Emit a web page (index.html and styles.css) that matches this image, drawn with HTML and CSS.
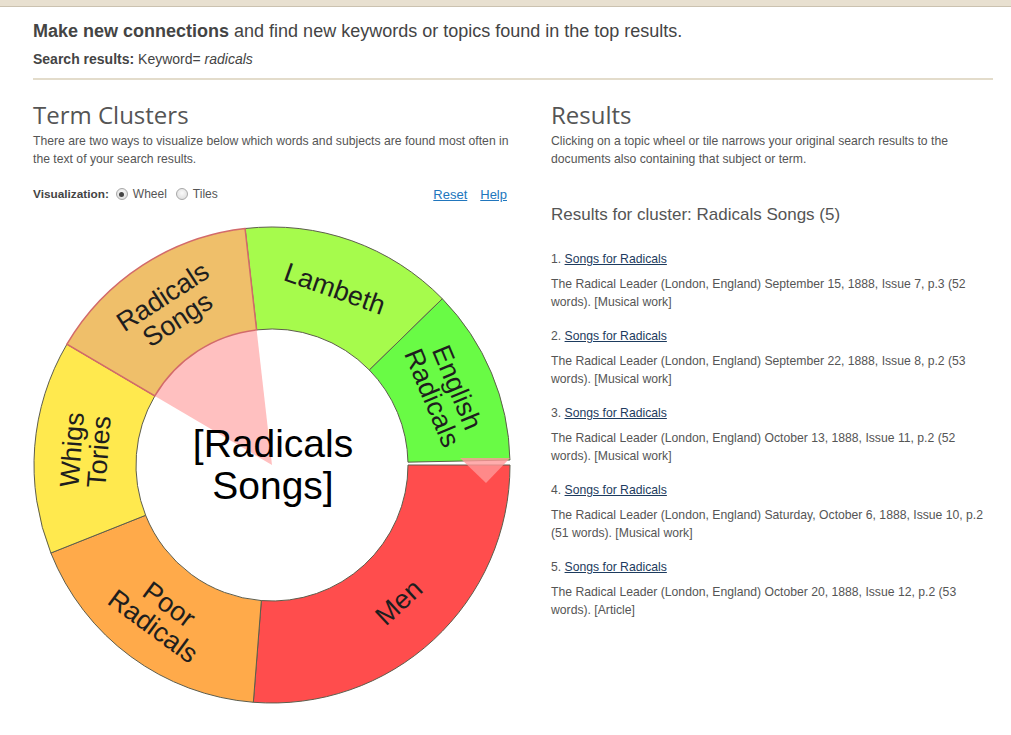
FILE: index.html
```html
<!DOCTYPE html>
<html>
<head>
    <meta charset="UTF-8">
    <title>Term Clusters</title>
    <link rel="stylesheet" href="styles.css">
</head>
<body>
    <div class="top-bar"></div>
    <div class="page">
        <h1 class="intro"><b>Make new connections</b> and find new keywords or topics found in the top results.</h1>
        <div class="search-line"><b>Search results:</b> Keyword= <i>radicals</i></div>
        <div class="divider"></div>

        <div class="columns">
            <div class="left-col">
                <h2 class="col-title">Term Clusters</h2>
                <p class="col-desc">There are two ways to visualize below which words and subjects are found most often in the text of your search results.</p>
                <div class="viz-bar">
                    <span class="viz-label">Visualization:</span>
                    <label class="viz-option"><input type="radio" name="viz" checked> Wheel</label>
                    <label class="viz-option"><input type="radio" name="viz"> Tiles</label>
                    <span class="viz-links">
                        <a href="#">Reset</a>
                        <a href="#">Help</a>
                    </span>
                </div>
                <svg class="wheel" id="wheel" width="478" height="478" viewBox="0 0 478 478"></svg>
            </div>

            <div class="right-col">
                <h2 class="col-title">Results</h2>
                <p class="col-desc">Clicking on a topic wheel or tile narrows your original search results to the documents also containing that subject or term.</p>
                <div class="cluster-title">Results for cluster: Radicals Songs (5)</div>
                <ol class="result-list">
                    <li>
                        <div class="result-title">1. <a href="#">Songs for Radicals</a></div>
                        <div class="result-desc">The Radical Leader (London, England) September 15, 1888, Issue 7, p.3 (52 words). [Musical work]</div>
                    </li>
                    <li>
                        <div class="result-title">2. <a href="#">Songs for Radicals</a></div>
                        <div class="result-desc">The Radical Leader (London, England) September 22, 1888, Issue 8, p.2 (53 words). [Musical work]</div>
                    </li>
                    <li>
                        <div class="result-title">3. <a href="#">Songs for Radicals</a></div>
                        <div class="result-desc">The Radical Leader (London, England) October 13, 1888, Issue 11, p.2 (52 words). [Musical work]</div>
                    </li>
                    <li>
                        <div class="result-title">4. <a href="#">Songs for Radicals</a></div>
                        <div class="result-desc">The Radical Leader (London, England) Saturday, October 6, 1888, Issue 10, p.2 (51 words). [Musical work]</div>
                    </li>
                    <li>
                        <div class="result-title">5. <a href="#">Songs for Radicals</a></div>
                        <div class="result-desc">The Radical Leader (London, England) October 20, 1888, Issue 12, p.2 (53 words). [Article]</div>
                    </li>
                </ol>
            </div>
        </div>
    </div>

    <script>
    const NS = 'http://www.w3.org/2000/svg';
    const wheel = document.getElementById('wheel');
    const cx = 239, cy = 238, R = 238, r = 136;

    // angles in degrees, clockwise from 3 o'clock
    const clusters = [
        { label: ['Men'], from: 0, to: 94.5, color: '#ff4d4d' },
        { label: ['Poor', 'Radicals'], from: 94.5, to: 158.3, color: '#ffaa4a' },
        { label: ['Whigs', 'Tories'], from: 158.3, to: 210.5, color: '#ffe94e' },
        { label: ['Radicals', 'Songs'], from: 210.5, to: 263.5, color: '#efbf6a', selected: true },
        { label: ['Lambeth'], from: 263.5, to: 315.7, color: '#a6fb4c' },
        { label: ['English', 'Radicals'], from: 315.7, to: 358.8, color: '#69fb45' }
    ];

    function pt(deg, rad) {
        const a = deg * Math.PI / 180;
        return (cx + rad * Math.cos(a)).toFixed(2) + ' ' + (cy + rad * Math.sin(a)).toFixed(2);
    }

    function el(name, attrs) {
        const node = document.createElementNS(NS, name);
        for (const k in attrs) node.setAttribute(k, attrs[k]);
        return node;
    }

    function segmentPath(c) {
        const big = c.to - c.from > 180 ? 1 : 0;
        return 'M' + pt(c.from, R) + ' A' + R + ' ' + R + ' 0 ' + big + ' 1 ' + pt(c.to, R) +
            ' L' + pt(c.to, r) + ' A' + r + ' ' + r + ' 0 ' + big + ' 0 ' + pt(c.from, r) + ' Z';
    }

    function addLabel(c) {
        const mid = (c.from + c.to) / 2;
        const a = mid * Math.PI / 180;
        const x = cx + 187 * Math.cos(a);
        const y = cy + 187 * Math.sin(a);
        const rot = mid < 180 ? mid - 90 : mid + 90;
        const text = el('text', { x: x, y: y, 'class': 'seg-label', transform: 'rotate(' + rot.toFixed(1) + ' ' + x.toFixed(1) + ' ' + y.toFixed(1) + ')' });
        c.label.forEach((line, i) => {
            const t = el('tspan', { x: x, y: y + (i - (c.label.length - 1) / 2) * 27 });
            t.textContent = line;
            text.appendChild(t);
        });
        wheel.appendChild(text);
    }

    const selected = clusters.find(c => c.selected);

    // highlight wedge for the selected cluster
    wheel.appendChild(el('path', {
        d: 'M' + cx + ' ' + cy + ' L' + pt(selected.from, r) + ' A' + r + ' ' + r + ' 0 0 1 ' + pt(selected.to, r) + ' Z',
        fill: '#ffc0c0'
    }));

    clusters.filter(c => !c.selected).concat([selected]).forEach(c => {
        wheel.appendChild(el('path', {
            d: segmentPath(c),
            fill: c.color,
            'class': c.selected ? 'seg seg-selected' : 'seg'
        }));
        addLabel(c);
    });

    // center caption
    const caption = el('text', { 'class': 'center-label', x: cx, y: cy });
    ['[Radicals', 'Songs]'].forEach((line, i) => {
        const t = el('tspan', { x: cx + 1, y: 216 + i * 42 });
        t.textContent = line;
        caption.appendChild(t);
    });
    wheel.appendChild(caption);

    // pointer
    wheel.appendChild(el('polygon', { points: '427,231 477,231 453,256', 'class': 'pointer' }));
    </script>
</body>
</html>
```

FILE: styles.css
```css
body {
    margin: 0;
    font-family: "Liberation Sans", Arial, sans-serif;
    color: #555;
    background-color: #fff;
}
.top-bar {
    height: 6px;
    background-color: #e8e0d0;
    border-bottom: 1px solid #cbc2b0;
}
.page {
    width: 960px;
    margin-left: 33px;
}
.intro {
    margin: 13px 0 0;
    font-size: 18px;
    line-height: 22px;
    font-weight: normal;
    color: #444;
}
.search-line {
    margin-top: 8px;
    font-size: 14px;
    line-height: 18px;
    color: #444;
}
.divider {
    height: 2px;
    margin-top: 10px;
    background-color: #e3dccb;
}
.columns {
    display: flex;
    gap: 40px;
}
.left-col {
    width: 478px;
}
.right-col {
    width: 437px;
}
.col-title {
    margin: 20px 0 0;
    font-family: "Open Sans", sans-serif;
    font-weight: 400;
    font-size: 24px;
    line-height: 29px;
    color: #555;
}
.col-desc {
    margin: 3px 0 0;
    font-size: 12.2px;
    line-height: 18px;
    color: #555;
}
.viz-bar {
    display: flex;
    align-items: center;
    height: 18px;
    margin-top: 17px;
    font-size: 12px;
}
.viz-label {
    font-weight: bold;
    font-size: 11.8px;
    color: #444;
    margin-right: 7px;
}
.viz-option {
    display: flex;
    align-items: center;
    gap: 5px;
    margin-right: 9px;
}
.viz-option input {
    appearance: none;
    -webkit-appearance: none;
    width: 12px;
    height: 12px;
    margin: 0;
    border: 1px solid #a8a8a8;
    border-radius: 50%;
    background: radial-gradient(circle at 50% 40%, #fafafa, #d8d8d8);
    box-sizing: border-box;
    position: relative;
}
.viz-option input:checked::after {
    content: "";
    position: absolute;
    left: 2.5px;
    top: 2.5px;
    width: 5px;
    height: 5px;
    border-radius: 50%;
    background-color: #444;
}
.viz-links {
    margin-left: auto;
    margin-right: 4px;
    display: flex;
    gap: 13px;
}
.viz-links a {
    font-size: 13px;
    color: #2176bd;
    text-decoration: underline;
}
.wheel {
    display: block;
    margin-top: 24px;
    overflow: visible;
}
.seg {
    stroke: #5d5d4c;
    stroke-width: 1;
}
.seg-selected {
    stroke: #d26a6a;
    stroke-width: 1.5;
}
.seg-label {
    font-family: "Liberation Sans", Arial, sans-serif;
    font-size: 27px;
    fill: #1e1e1e;
    text-anchor: middle;
    dominant-baseline: central;
}
.center-label {
    font-family: "Liberation Sans", Arial, sans-serif;
    font-size: 39px;
    fill: #000;
    text-anchor: middle;
    dominant-baseline: central;
}
.pointer {
    fill: #ff9999;
    opacity: 0.8;
}
.cluster-title {
    margin-top: 36px;
    font-size: 17px;
    line-height: 21px;
    color: #555;
}
.result-list {
    list-style: none;
    margin: 25px 0 0;
    padding: 0;
}
.result-list li {
    margin-bottom: 16px;
}
.result-title {
    font-size: 12.2px;
    line-height: 18px;
    color: #555;
}
.result-title a {
    color: #1d3b5e;
    text-decoration: underline;
}
.result-desc {
    margin-top: 7px;
    font-size: 12.2px;
    line-height: 18px;
    color: #555;
}
```
